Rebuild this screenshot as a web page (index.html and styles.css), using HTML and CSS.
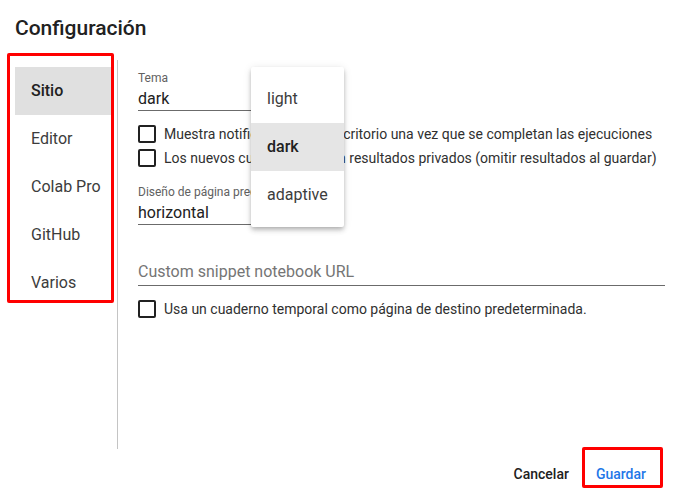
FILE: index.html
```html
<!DOCTYPE html>
<html lang="es">
<head>
<meta charset="utf-8">
<title>Configuración</title>
<link rel="stylesheet" href="styles.css">
</head>
<body>
<div class="dialog">
  <h2 class="title">Configuración</h2>
  <div class="main">
    <nav class="sidebar">
      <div class="nav-item active">Sitio</div>
      <div class="nav-item">Editor</div>
      <div class="nav-item">Colab Pro</div>
      <div class="nav-item">GitHub</div>
      <div class="nav-item">Varios</div>
    </nav>
    <div class="content">
      <div class="field field-short">
        <div class="field-label">Tema</div>
        <div class="field-input">dark</div>
      </div>
      <div class="checks">
        <label class="check"><span class="box"></span><span>Muestra notificaciones de escritorio una vez que se completan las ejecuciones</span></label>
        <label class="check"><span class="box"></span><span>Los nuevos cuadernos tienen resultados privados (omitir resultados al guardar)</span></label>
      </div>
      <div class="field field-short field-second">
        <div class="field-label">Diseño de página predeterminado</div>
        <div class="field-input">horizontal</div>
      </div>
      <div class="field field-wide">
        <div class="field-input placeholder">Custom snippet notebook URL</div>
      </div>
      <label class="check check-last"><span class="box"></span><span>Usa un cuaderno temporal como página de destino predeterminada.</span></label>

      <div class="menu">
        <div class="menu-item">light</div>
        <div class="menu-item selected">dark</div>
        <div class="menu-item">adaptive</div>
      </div>
    </div>
  </div>
  <div class="footer">
    <button class="btn">Cancelar</button>
    <button class="btn btn-primary">Guardar</button>
  </div>
  <div class="mark mark-nav"></div>
  <div class="mark mark-save"></div>
</div>
</body>
</html>
```

FILE: styles.css
```css
* { box-sizing: border-box; }
html, body {
  margin: 0;
  padding: 0;
  background: #fff;
}
body {
  font-family: Roboto, "Liberation Sans", Arial, sans-serif;
  color: rgba(0,0,0,0.87);
  width: 680px;
  height: 494px;
  overflow: hidden;
}
.dialog {
  position: relative;
  width: 680px;
  height: 494px;
}
.title {
  margin: 0;
  padding: 14px 0 0 15px;
  height: 42px;
  font-size: 21px;
  line-height: 28px;
  font-weight: 500;
  color: #212121;
}
.main {
  margin-top: 18px;
  display: flex;
  height: 389px;
}
.sidebar {
  width: 118px;
  padding: 7px 4px 0 15px;
  border-right: 1px solid #c4c4c4;
  flex: none;
}
.nav-item {
  height: 48px;
  line-height: 48px;
  padding-left: 16px;
  font-size: 16px;
  color: #3c3c3c;
  white-space: nowrap;
}
.nav-item.active {
  background: #e0e0e0;
  font-weight: 500;
  color: #212121;
}
.content {
  position: relative;
  flex: 1;
  padding: 11px 15px 0 20px;
}
.field-label {
  font-size: 12px;
  line-height: 14px;
  color: #616161;
  white-space: nowrap;
}
.field-input {
  margin-top: 4px;
  font-size: 16px;
  line-height: 20px;
  padding-bottom: 1px;
  border-bottom: 1px solid #6b6b6b;
  color: #212121;
}
.field-short { width: 200px; }
.field-second { margin-top: 15px; }
.field-wide { margin-top: 37px; }
.field-wide .field-input { padding-bottom: 3px; }
.placeholder { color: #757575; }
.checks { margin-top: 11px; }
.check {
  display: flex;
  align-items: center;
  gap: 8px;
  height: 24px;
  font-size: 14px;
  color: #303030;
  white-space: nowrap;
}
.check-last { margin-top: 11px; }
.box {
  width: 18px;
  height: 18px;
  border: 2px solid #212121;
  border-radius: 2px;
  flex: none;
}
.menu {
  position: absolute;
  left: 133px;
  top: 7px;
  width: 93px;
  padding: 8px 0;
  background: #fff;
  border-radius: 2px;
  box-shadow: 0 2px 4px -1px rgba(0,0,0,0.2), 0 4px 5px 0 rgba(0,0,0,0.12), 0 1px 8px 0 rgba(0,0,0,0.1);
}
.menu-item {
  height: 48px;
  line-height: 48px;
  padding-left: 16px;
  font-size: 16px;
  color: #3c3c3c;
}
.menu-item.selected {
  background: #e5e5e5;
  font-weight: 500;
  color: #212121;
}
.footer {
  display: flex;
  justify-content: flex-end;
  gap: 11px;
  padding: 7px 26px 0 0;
}
.btn {
  font-family: inherit;
  height: 36px;
  padding: 0 8px;
  border: none;
  background: transparent;
  font-size: 14px;
  font-weight: 500;
  color: #212121;
}
.btn-primary { color: #1e77e8; }
.mark {
  position: absolute;
  border: 3px solid #ff0000;
  border-radius: 2px;
  pointer-events: none;
}
.mark-nav {
  left: 7px;
  top: 53px;
  width: 107px;
  height: 250px;
}
.mark-save {
  left: 582px;
  top: 447px;
  width: 81px;
  height: 41px;
}
```
